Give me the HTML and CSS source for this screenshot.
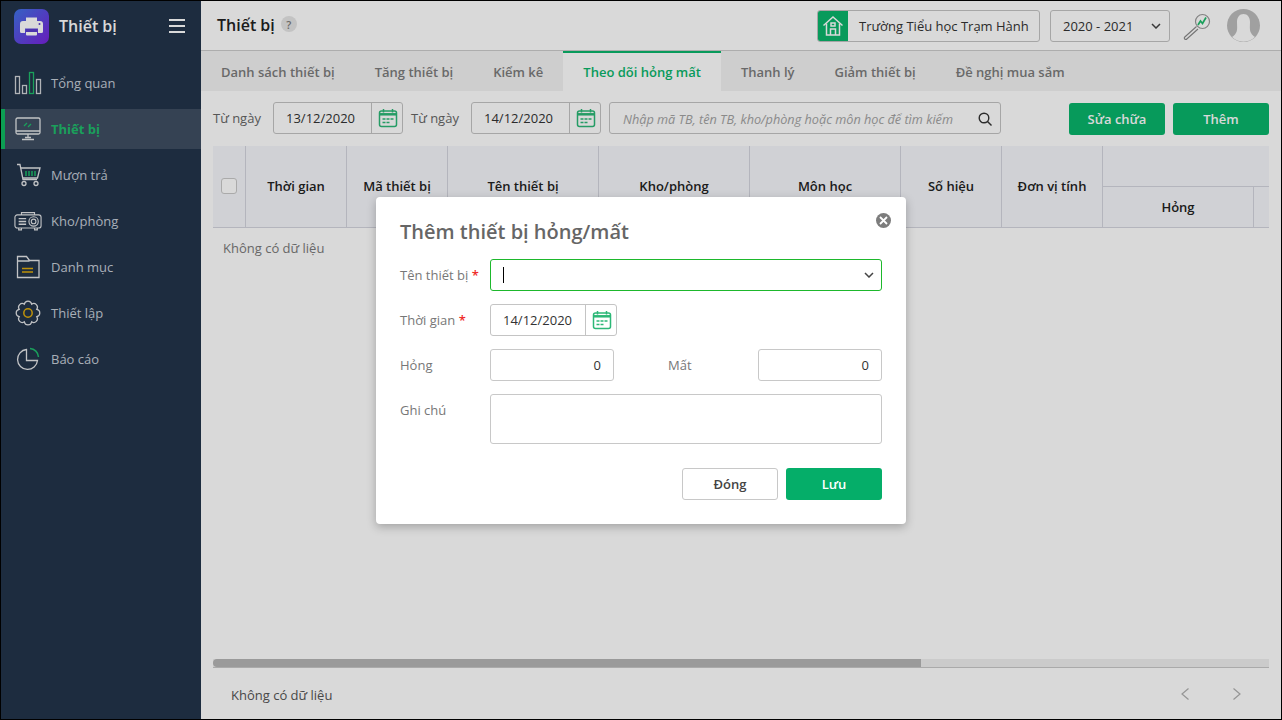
FILE: index.html
```html
<!DOCTYPE html>
<html lang="vi">
<head>
<meta charset="utf-8">
<title>Thiết bị</title>
<link rel="stylesheet" href="styles.css">
</head>
<body>
<div class="app">
  <aside class="sidebar">
    <div class="brand">
      <span class="logo">
        <svg width="25" height="25" viewBox="0 0 25 25"><path d="M7 3.500h11v4H7z" fill="#fff"/><path d="M4 7h17a3 3 0 0 1 3 3v7.500a1.500 1.500 0 0 1-1.500 1.500H19v-4.500H6V19H2.500A1.500 1.500 0 0 1 1 17.500V10a3 3 0 0 1 3-3z" fill="#fff"/><path d="M7 16h11v4.500a1 1 0 0 1-1 1H8a1 1 0 0 1-1-1z" fill="#fff"/><path d="M7 15h11v3H7z" fill="#5a3ccd"/><circle cx="20.500" cy="10" r="1" fill="#5a3ccd"/></svg>
      </span>
      <span class="brand-name">Thiết bị</span>
      <span class="burger"><i></i><i></i><i></i></span>
    </div>
    <nav class="menu">
      <a class="item">
        <svg class="ico" width="28" height="24" viewBox="0 0 28 24" fill="none" stroke="#cfd3d8" stroke-width="1.300"><rect x="1.500" y="5.500" width="4" height="17"/><rect x="8.500" y="14.500" width="4" height="8"/><rect x="15.500" y="1.500" width="4" height="21" stroke="#1fbc6c"/><rect x="22.500" y="8.500" width="4" height="14"/></svg>
        <span>Tổng quan</span>
      </a>
      <a class="item active">
        <svg class="ico" width="28" height="24" viewBox="0 0 28 24" fill="none" stroke="#e4e6e8" stroke-width="1.300"><rect x="2" y="1" width="24" height="16" rx="1.500"/><path d="M2 14h24M14 17v4M8 22.500h12M11 20.500h6"/><path d="M10 9l3-3M14 10l3-3" stroke="#1fbc6c"/></svg>
        <span>Thiết bị</span>
      </a>
      <a class="item">
        <svg class="ico" width="28" height="24" viewBox="0 0 28 24" fill="none" stroke="#e4e6e8" stroke-width="1.300"><path d="M3 1.500h3l3 15h14"/><path d="M7 5h19l-2.500 10H9"/><circle cx="10" cy="20.500" r="2"/><circle cx="22" cy="20.500" r="2"/><path d="M12 8v5M15 8v5M18 8v5M21 8v5" stroke="#1fbc6c" stroke-width="1.500"/></svg>
        <span>Mượn trả</span>
      </a>
      <a class="item">
        <svg class="ico" width="30" height="22" viewBox="0 0 30 22" fill="none" stroke="#e4e6e8" stroke-width="1.200"><rect x="1" y="4.500" width="28" height="14" rx="2.500"/><path d="M8 4.500V2h14v2.500M5 18.500v2h3v-2M22 18.500v2h3v-2"/><path d="M5 8.500h8M5 11.500h8M5 14.500h8" stroke-width="1.500"/><circle cx="21" cy="11.500" r="5"/><circle cx="21" cy="11.500" r="2.500"/></svg>
        <span>Kho/phòng</span>
      </a>
      <a class="item">
        <svg class="ico" width="24" height="24" viewBox="0 0 24 24" fill="none" stroke="#e4e6e8" stroke-width="1.300"><path d="M1.500 1.500h9l3 4h9.500V22.500H1.500zM1.500 6h12"/><path d="M6 13.500h11M6 17h11" stroke="#e0ac0c" stroke-width="1.500"/></svg>
        <span>Danh mục</span>
      </a>
      <a class="item">
        <svg class="ico" width="26" height="26" viewBox="0 0 26 26" fill="none" stroke="#e4e6e8" stroke-width="1.200"><path d="M21.780 16.640A3.700 3.700 0 0 1 16.640 21.780A3.700 3.700 0 0 1 9.360 21.780A3.700 3.700 0 0 1 4.220 16.640A3.700 3.700 0 0 1 4.220 9.360A3.700 3.700 0 0 1 9.360 4.220A3.700 3.700 0 0 1 16.640 4.220A3.700 3.700 0 0 1 21.780 9.360A3.700 3.700 0 0 1 21.780 16.640z"/><circle cx="13" cy="13" r="4.200" stroke="#e0ac0c" stroke-width="1.500"/></svg>
        <span>Thiết lập</span>
      </a>
      <a class="item">
        <svg class="ico" width="24" height="24" viewBox="0 0 24 24" fill="none" stroke="#e4e6e8" stroke-width="1.300"><path d="M10.500 2.500a10 10 0 1 0 11 11H10.500z"/><path d="M14 1.500a9 9 0 0 1 8.500 8.500" stroke="#1fbc6c" stroke-width="1.500"/></svg>
        <span>Báo cáo</span>
      </a>
    </nav>
  </aside>
  <main class="main">
    <header class="topbar">
      <h1 class="page-title">Thiết bị</h1>
      <span class="help">?</span>
      <div class="school">
        <span class="school-ico">
          <svg width="22" height="22" viewBox="0 0 22 22" fill="none" stroke="#fff" stroke-width="1.500"><path d="M1.500 10.500L11 2l9.500 8.500"/><path d="M4.500 8.500V20h13V8.500"/><path d="M8.500 20v-6h5v6"/><rect x="9" y="8" width="4" height="3"/></svg>
        </span>
        <span class="school-name">Trường Tiểu học Trạm Hành</span>
      </div>
      <div class="year">
        <span>2020 - 2021</span>
        <svg width="10" height="6" viewBox="0 0 10 6" fill="none" stroke="#444" stroke-width="1.500"><path d="M1 1l4 4 4-4"/></svg>
      </div>
      <svg class="lens" width="28" height="28" viewBox="0 0 28 28" fill="none"><circle cx="19.500" cy="9.500" r="7" stroke="#9a9a9a" stroke-width="1.200"/><path d="M13.500 14.500L1.800 25a1.300 1.300 0 0 0 2 2L15 17" stroke="#8a8a8a" stroke-width="1.100"/><path d="M15 13l2.500-4 2 2.500 3.500-6" stroke="#1fbc6c" stroke-width="1.700"/></svg>
      <svg class="avatar" width="33" height="33" viewBox="0 0 33 33"><circle cx="16.500" cy="16.500" r="16.500" fill="#bdbdbd"/><path d="M16.500 5c4 0 6.500 3.500 6.500 8 0 5-1 9 2 12.500 1 1.200 2 2 3 2.500a16.500 16.500 0 0 1-23 0c1-.5 2-1.300 3-2.500 3-3.500 2-7.500 2-12.500 0-4.500 2.500-8 6.500-8z" fill="#fff"/></svg>
    </header>
    <div class="tabs">
      <a class="tab">Danh sách thiết bị</a>
      <a class="tab">Tăng thiết bị</a>
      <a class="tab">Kiểm kê</a>
      <a class="tab current">Theo dõi hỏng mất</a>
      <a class="tab">Thanh lý</a>
      <a class="tab">Giảm thiết bị</a>
      <a class="tab">Đề nghị mua sắm</a>
    </div>
    <div class="toolbar">
      <label class="tool-label">Từ ngày</label>
      <div class="date">
        <span class="date-val">13/12/2020</span>
        <span class="date-ico"><svg width="20" height="20" viewBox="0 0 20 20" fill="none" stroke="#2cb877" stroke-width="1.500"><rect x="1.500" y="3" width="17" height="15.500" rx="2"/><path d="M1.500 6.300h17" stroke-width="2.500"/><path d="M5.500 1v3.500M14.500 1v3.500"/><path d="M4.500 11h3M8.500 11h3M12.500 11h3M4.500 14.500h3M8.500 14.500h3" stroke-width="1.400"/></svg></span>
      </div>
      <label class="tool-label">Từ ngày</label>
      <div class="date">
        <span class="date-val">14/12/2020</span>
        <span class="date-ico"><svg width="20" height="20" viewBox="0 0 20 20" fill="none" stroke="#2cb877" stroke-width="1.500"><rect x="1.500" y="3" width="17" height="15.500" rx="2"/><path d="M1.500 6.300h17" stroke-width="2.500"/><path d="M5.500 1v3.500M14.500 1v3.500"/><path d="M4.500 11h3M8.500 11h3M12.500 11h3M4.500 14.500h3M8.500 14.500h3" stroke-width="1.400"/></svg></span>
      </div>
      <div class="search">
        <span class="search-text">Nhập mã TB, tên TB, kho/phòng hoặc môn học để tìm kiếm</span>
        <svg width="14" height="14" viewBox="0 0 14 14" fill="none" stroke="#333" stroke-width="1.400"><circle cx="6" cy="6" r="4.800"/><path d="M9.500 9.500L13.500 13.500"/></svg>
      </div>
      <button class="btn first">Sửa chữa</button>
      <button class="btn">Thêm</button>
    </div>
    <div class="grid-wrap">
      <div class="thead">
        <div class="th th-check"><span class="check"></span></div>
        <div class="th w100">Thời gian</div>
        <div class="th w100">Mã thiết bị</div>
        <div class="th w150">Tên thiết bị</div>
        <div class="th w150">Kho/phòng</div>
        <div class="th w150">Môn học</div>
        <div class="th w100">Số hiệu</div>
        <div class="th w100">Đơn vị tính</div>
        <div class="th-group">
          <div class="th-group-top"></div>
          <div class="th-group-sub"><div class="th sub-a">Hỏng</div><div class="th sub-b"></div></div>
        </div>
      </div>
      <div class="empty">Không có dữ liệu</div>
    </div>
    <div class="scroll"><div class="thumb"></div></div>
    <footer class="pager">
      <span>Không có dữ liệu</span>
      <span class="pager-nav">
        <svg width="10" height="14" viewBox="0 0 10 14" fill="none" stroke="#b0b0b0" stroke-width="1.200"><path d="M8.500 1.500L2 7l6.500 5.500"/></svg>
        <svg width="10" height="14" viewBox="0 0 10 14" fill="none" stroke="#b0b0b0" stroke-width="1.200"><path d="M1.500 1.500L8 7l-6.500 5.500"/></svg>
      </span>
    </footer>
  </main>
  <div class="overlay"></div>
  <section class="dialog">
    <span class="close"><svg width="9" height="9" viewBox="0 0 9 9" stroke="#fff" stroke-width="1.800"><path d="M1 1l7 7M8 1L1 8"/></svg></span>
    <h2 class="dlg-title">Thêm thiết bị hỏng/mất</h2>
    <div class="row">
      <label class="dlg-label">Tên thiết bị <b>*</b></label>
      <div class="select"><i class="caret"></i><svg width="10" height="6" viewBox="0 0 10 6" fill="none" stroke="#444" stroke-width="1.500"><path d="M1 1l4 4 4-4"/></svg></div>
    </div>
    <div class="row">
      <label class="dlg-label">Thời gian <b>*</b></label>
      <div class="date dlg-date">
        <span class="date-val">14/12/2020</span>
        <span class="date-ico"><svg width="20" height="20" viewBox="0 0 20 20" fill="none" stroke="#2cb877" stroke-width="1.500"><rect x="1.500" y="3" width="17" height="15.500" rx="2"/><path d="M1.500 6.300h17" stroke-width="2.500"/><path d="M5.500 1v3.500M14.500 1v3.500"/><path d="M4.500 11h3M8.500 11h3M12.500 11h3M4.500 14.500h3M8.500 14.500h3" stroke-width="1.400"/></svg></span>
      </div>
    </div>
    <div class="row">
      <label class="dlg-label">Hỏng</label>
      <div class="num">0</div>
      <label class="dlg-label mat">Mất</label>
      <div class="num">0</div>
    </div>
    <div class="row">
      <label class="dlg-label note">Ghi chú</label>
      <div class="area"></div>
    </div>
    <div class="actions">
      <button class="dlg-btn ghost">Đóng</button>
      <button class="dlg-btn primary">Lưu</button>
    </div>
  </section>
</div>
</body>
</html>
```

FILE: styles.css
```css
* { box-sizing: border-box; }
html, body { margin: 0; padding: 0; }
body { font-family: "Open Sans", "Noto Sans", sans-serif; font-size: 13px; color: #333; background: #fff; }
.app { position: relative; display: flex; width: 1282px; height: 720px; overflow: hidden; border: 1px solid #000; }

.sidebar { width: 200px; flex: none; background: #23344b; }
.brand { display: flex; align-items: center; height: 50px; padding: 0 16px 0 13px; }
.logo { width: 35px; height: 35px; border-radius: 7px; background: linear-gradient(135deg, #3f73e6, #7a22dc); display: flex; align-items: center; justify-content: center; }
.brand-name { margin-left: 10px; font-size: 16px; font-weight: 600; color: #fff; flex: 1; }
.burger { display: flex; flex-direction: column; gap: 4px; width: 16px; }
.burger i { display: block; height: 2px; background: #fff; }
.menu { display: flex; flex-direction: column; gap: 6px; margin-top: 12px; }
.item { display: flex; align-items: center; height: 40px; padding-left: 13px; gap: 9px; color: #c6ced8; border-left: 4px solid transparent; }
.ico { flex: none; width: 28px; margin-left: -4px; }
.item.active { background: #3f4e62; border-left-color: #0fbb62; color: #1fbc6c; font-weight: 700; padding-left: 9px; }
.item.active .ico { margin-left: 0; }

.main { flex: 1; min-width: 0; display: flex; flex-direction: column; background: #fff; }
.topbar { display: flex; align-items: center; height: 50px; flex: none; padding: 0 21px 0 16px; border-bottom: 1px solid #ccc; }
.page-title { margin: 0; font-size: 16px; font-weight: 600; color: #222; line-height: 20px; padding-bottom: 2px; }
.help { width: 16px; height: 16px; margin: -3px 0 0 6px; border-radius: 50%; background: #e6e6e6; color: #7c7c7c; font-size: 11px; font-weight: 600; display: flex; align-items: center; justify-content: center; }
.school { margin-left: auto; display: flex; height: 32px; width: 223px; border: 1px solid #c4c4c4; border-radius: 3px; overflow: hidden; background: #fff; }
.school-ico { width: 31px; flex: none; background: #0ab66c; display: flex; align-items: center; justify-content: center; margin: -1px 0 -1px -1px; }
.school-name { padding-left: 11px; line-height: 30px; color: #333; white-space: nowrap; }
.year { margin-left: 10px; width: 120px; height: 32px; border: 1px solid #c4c4c4; border-radius: 3px; display: flex; align-items: center; justify-content: space-between; padding: 0 8px 0 12px; color: #333; }
.lens { margin-left: 13px; flex: none; }
.avatar { margin-left: 16px; flex: none; }

.tabs { display: flex; height: 40px; flex: none; background: #f2f2f2; }
.tab { padding: 1px 20px 0; line-height: 41px; font-weight: 600; color: #7c7c7c; white-space: nowrap; }
.tab.current { background: #fff; color: #0ab66c; border-top: 2px solid #0ab66c; padding-top: 0; line-height: 39px; }

.toolbar { display: flex; align-items: center; gap: 8px; height: 55px; flex: none; padding: 0 12px 1px 12px; }
.tool-label { width: 52px; color: #666; white-space: nowrap; }
.date { display: flex; width: 130px; height: 32px; border: 1px solid #c4c4c4; border-radius: 3px; background: #fff; }
.date-val { flex: 1; padding-left: 12px; line-height: 30px; color: #333; }
.date-ico { width: 31px; flex: none; border-left: 1px solid #c4c4c4; display: flex; align-items: center; justify-content: center; padding-left: 2px; }
.search { width: 392px; height: 32px; border: 1px solid #c4c4c4; border-radius: 3px; background: #fff; display: flex; align-items: center; justify-content: space-between; padding: 1px 8px 0 13px; }
.search-text { font-size: 12.7px; font-style: italic; color: #a3a3a3; white-space: nowrap; }
.btn { width: 96px; height: 32px; border: 0; border-radius: 3px; background: #09b56b; color: #fff; font: 600 13px "Open Sans", sans-serif; padding: 0; margin-top: 2px; }
.btn.first { margin-left: 60px; }

.grid-wrap { flex: 1; margin: 0 12px; min-height: 0; }
.thead { display: flex; height: 82px; background: #f5f6fb; border-bottom: 1px solid #d4d5de; overflow: hidden; }
.th { flex: none; border-right: 1px solid #d4d5de; display: flex; align-items: center; justify-content: center; font-weight: 600; color: #222; padding-bottom: 2px; }
.th-check { width: 33px; }
.check { width: 16px; height: 16px; border: 1px solid #c8c8c8; border-radius: 3px; background: #fff; }
.w100 { width: 101px; }
.w150 { width: 151px; }
.th-group { flex: 1; display: flex; flex-direction: column; }
.th-group-top { height: 41px; flex: none; border-bottom: 1px solid #d4d5de; }
.th-group-sub { flex: 1; display: flex; }
.sub-a { width: 151px; padding-top: 1px; }
.sub-b { border-right: 0; }
.empty { padding: 11px 10px; color: #7a7a7a; line-height: 18px; }

.scroll { height: 9px; margin: 0 12px; flex: none; background: #efefef; border-bottom: 1px solid #c8c8c8; }
.thumb { width: 708px; height: 8px; border-radius: 4px 0 0 4px; background: #b5b5b5; }
.pager { height: 51px; flex: none; display: flex; align-items: center; justify-content: space-between; padding: 2px 39px 0 30px; color: #555; }
.pager-nav { display: flex; gap: 42px; padding-bottom: 1px; }

.overlay { position: absolute; inset: 0; background: rgba(0, 0, 0, 0.15); }

.dialog { position: absolute; left: 375px; top: 196px; width: 530px; height: 327px; padding: 20px 24px 24px; background: #fff; border-radius: 4px; box-shadow: 0 3px 10px rgba(0, 0, 0, 0.25); display: flex; flex-direction: column; gap: 13px; }
.close { position: absolute; top: 16px; right: 15px; width: 15px; height: 15px; border-radius: 50%; background: #7d7d7d; display: flex; align-items: center; justify-content: center; }
.dlg-title { margin: 0 0 -1px; font-size: 20px; font-weight: 600; line-height: 30px; color: #666; }
.row { display: flex; }
.dlg-label { width: 90px; flex: none; line-height: 32px; color: #777; }
.dlg-label b { color: #ef2b2b; font-weight: 600; }
.select { flex: 1; height: 32px; border: 1px solid #1db82c; border-radius: 3px; display: flex; align-items: center; justify-content: space-between; padding: 0 7px 0 12px; }
.caret { display: block; width: 1px; height: 16px; background: #000; }
.dlg-date { width: 127px; }
.num { width: 124px; height: 32px; border: 1px solid #c8c8c8; border-radius: 3px; text-align: right; padding-right: 12px; line-height: 30px; color: #333; }
.mat { margin-left: 54px; }
.note { line-height: 32px; }
.area { flex: 1; height: 50px; border: 1px solid #c8c8c8; border-radius: 3px; }
.actions { display: flex; justify-content: flex-end; gap: 8px; margin-top: 11px; }
.dlg-btn { width: 96px; height: 32px; border-radius: 3px; font: 600 13px "Open Sans", sans-serif; padding: 0; }
.ghost { background: #fff; border: 1px solid #c8c8c8; color: #444; }
.primary { background: #05ae69; border: 0; color: #fff; }
```
